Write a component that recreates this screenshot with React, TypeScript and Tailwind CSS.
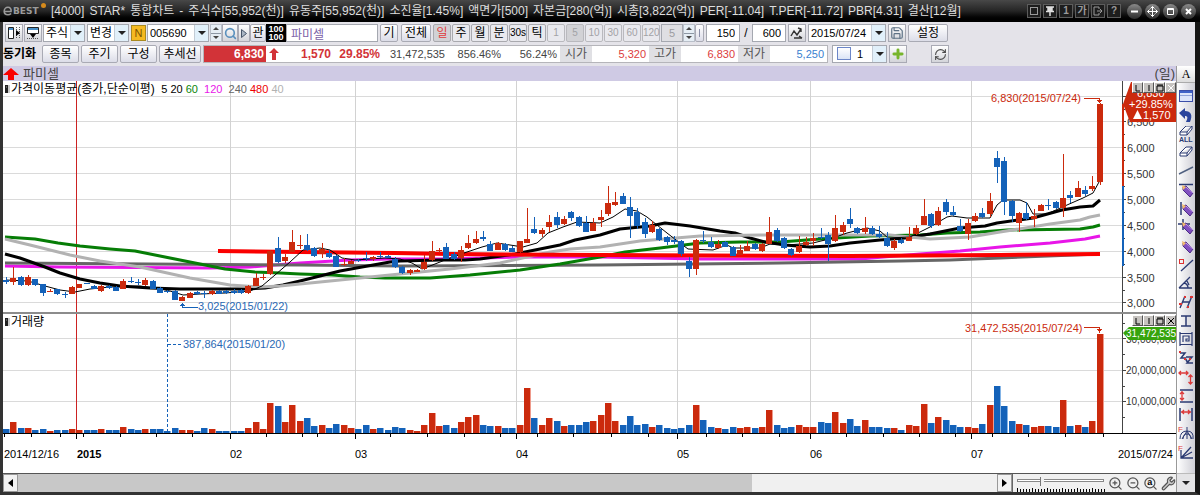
import type { ReactNode } from 'react';
import clsx from 'clsx';
import { Search, Save, Plus, RefreshCw, ZoomIn, ZoomOut, Wrench } from 'lucide-react';

const RED = '#cb2a0d';
const BLUE = '#1462b9';

// colour, body top, body bottom, high, low, volume bar height
type Bar = ['R' | 'B', number, number, number, number, number];

const BARS: Bar[] = [
  ['B', 280, 282, 277, 284, 4], ['R', 278, 282, 267, 285, 11], ['B', 277, 285, 276, 286, 5], ['R', 277, 285, 275, 286, 5],
  ['B', 279, 285, 279, 286, 3], ['B', 284, 293, 284, 296, 4], ['R', 291, 292, 289, 292, 2], ['B', 289, 294, 289, 295, 3],
  ['B', 294, 295, 292, 298, 3], ['R', 287, 294, 286, 294, 4], ['R', 284, 288, 284, 288, 3], ['B', 283, 284, 283, 284, 3],
  ['B', 286, 289, 285, 289, 3], ['R', 286, 291, 285, 292, 4], ['B', 286, 288, 285, 289, 3], ['B', 287, 291, 286, 291, 3],
  ['R', 281, 289, 279, 289, 6], ['B', 281, 282, 277, 283, 4], ['B', 282, 283, 279, 285, 3], ['R', 280, 285, 278, 286, 4],
  ['B', 281, 289, 280, 289, 4], ['B', 288, 293, 287, 293, 4], ['B', 291, 292, 290, 293, 2], ['B', 291, 300, 290, 300, 5],
  ['R', 297, 301, 296, 301, 3], ['R', 293, 298, 292, 298, 3], ['B', 292, 294, 291, 295, 2], ['B', 293, 294, 291, 298, 5],
  ['R', 291, 294, 290, 295, 4], ['B', 291, 294, 290, 294, 2], ['B', 291, 293, 290, 294, 2], ['B', 291, 293, 289, 294, 2],
  ['B', 290, 293, 289, 294, 2], ['R', 286, 293, 285, 294, 5], ['R', 278, 286, 273, 286, 11], ['R', 277, 278, 274, 280, 4],
  ['R', 251, 274, 250, 275, 30], ['B', 248, 262, 237, 263, 27], ['R', 257, 261, 254, 263, 11], ['R', 242, 252, 230, 252, 28],
  ['R', 245, 246, 235, 249, 12], ['B', 245, 250, 234, 251, 15], ['B', 248, 256, 247, 257, 7], ['R', 249, 254, 243, 258, 8],
  ['B', 253, 257, 250, 258, 5], ['B', 256, 267, 255, 267, 9], ['R', 264, 265, 258, 266, 8], ['R', 261, 264, 260, 264, 5],
  ['B', 260, 261, 259, 262, 4], ['B', 258, 259, 252, 261, 8], ['R', 257, 259, 256, 261, 4], ['B', 256, 257, 252, 258, 5],
  ['B', 256, 258, 255, 258, 3], ['B', 259, 267, 257, 268, 6], ['B', 267, 273, 266, 274, 5], ['R', 270, 273, 269, 275, 3],
  ['R', 270, 272, 269, 272, 2], ['R', 262, 269, 255, 270, 8], ['R', 251, 260, 241, 261, 20], ['R', 250, 251, 248, 253, 7],
  ['B', 247, 259, 243, 259, 8], ['B', 254, 259, 252, 260, 5], ['R', 250, 258, 246, 262, 11], ['R', 243, 248, 235, 249, 16],
  ['R', 239, 243, 231, 244, 18], ['B', 237, 239, 231, 241, 8], ['B', 244, 251, 241, 251, 7], ['R', 243, 250, 242, 250, 7],
  ['B', 244, 250, 243, 251, 5], ['B', 248, 252, 246, 252, 5], ['R', 241, 252, 241, 253, 8], ['R', 239, 243, 208, 243, 45],
  ['B', 229, 233, 217, 234, 15], ['R', 230, 234, 228, 237, 8], ['R', 222, 227, 215, 232, 15], ['B', 217, 225, 212, 228, 12],
  ['R', 219, 224, 216, 225, 7], ['B', 212, 218, 211, 221, 8], ['B', 217, 226, 216, 227, 8], ['B', 223, 232, 216, 232, 11],
  ['R', 223, 231, 218, 231, 12], ['R', 217, 220, 210, 227, 18], ['R', 203, 214, 186, 216, 30], ['R', 202, 205, 192, 206, 12],
  ['B', 196, 204, 193, 204, 8], ['B', 207, 216, 197, 238, 17], ['B', 212, 226, 208, 229, 8], ['B', 222, 234, 218, 238, 9],
  ['R', 225, 232, 221, 233, 6], ['B', 229, 240, 228, 241, 8], ['B', 237, 242, 236, 245, 5], ['B', 240, 242, 236, 244, 4],
  ['B', 241, 254, 240, 256, 5], ['B', 261, 269, 257, 277, 8], ['R', 240, 269, 239, 275, 28], ['B', 240, 241, 231, 243, 13],
  ['B', 242, 247, 237, 248, 6], ['R', 244, 248, 240, 249, 5], ['B', 242, 247, 241, 247, 4], ['B', 247, 256, 246, 256, 6],
  ['R', 250, 255, 245, 255, 5], ['R', 246, 251, 241, 251, 6], ['B', 244, 249, 243, 250, 5], ['R', 244, 251, 243, 252, 6],
  ['R', 232, 244, 217, 244, 23], ['B', 230, 241, 228, 242, 8], ['B', 238, 248, 237, 249, 5], ['B', 249, 255, 248, 256, 6],
  ['R', 246, 252, 236, 253, 8], ['R', 242, 245, 237, 246, 6], ['R', 238, 241, 233, 246, 6], ['B', 237, 238, 228, 239, 11],
  ['B', 235, 244, 232, 261, 10], ['R', 228, 241, 215, 242, 21], ['R', 225, 232, 222, 235, 10], ['B', 219, 224, 208, 228, 14],
  ['B', 228, 233, 227, 234, 7], ['R', 228, 232, 217, 234, 13], ['B', 228, 234, 226, 235, 6], ['B', 234, 237, 226, 238, 6],
  ['B', 238, 246, 232, 247, 5], ['R', 241, 248, 239, 250, 5], ['B', 240, 243, 238, 244, 3], ['R', 237, 241, 227, 241, 8],
  ['R', 228, 234, 225, 235, 7], ['R', 216, 225, 199, 225, 29], ['B', 214, 226, 213, 228, 10], ['R', 211, 225, 207, 226, 16],
  ['B', 202, 212, 199, 215, 13], ['B', 212, 215, 206, 216, 8], ['B', 226, 231, 219, 232, 6], ['R', 223, 234, 219, 240, 6],
  ['R', 216, 221, 213, 222, 5], ['B', 213, 217, 208, 218, 9], ['R', 201, 214, 193, 217, 28], ['B', 158, 167, 151, 183, 47],
  ['B', 161, 202, 157, 215, 27], ['B', 201, 216, 200, 222, 12], ['R', 213, 223, 212, 232, 9], ['B', 213, 219, 202, 220, 8],
  ['R', 216, 219, 209, 227, 6], ['R', 205, 211, 204, 211, 7], ['B', 205, 206, 199, 210, 7], ['B', 202, 208, 201, 209, 6],
  ['R', 198, 208, 154, 217, 33], ['B', 195, 198, 191, 203, 7], ['R', 188, 197, 181, 197, 8], ['B', 190, 194, 186, 196, 6],
  ['R', 186, 189, 176, 191, 12], ['R', 104, 182, 103, 185, 99],
];

const barX = (i: number) => Math.round(6 + 7.34 * i);

const AVERAGES = [
  { color: '#e815e8', width: 3, points: '5,266 60,267 210,268 250,267 300,263 350,260 390,259 440,259 520,257 600,257 700,259 800,259 860,259 895,256 920,254 960,251 1000,247 1050,243 1085,239 1100,236' },
  { color: '#666666', width: 3, points: '5,263 300,265 400,266 600,265 780,263 900,261 950,260 1000,258 1100,254' },
  { color: '#067d06', width: 3, points: '5,237 35,239 58,243 80,246 110,249 135,251 160,256 180,260 200,264 225,269 255,272 280,273 300,274 332,275 360,277 385,278 430,278 470,275 520,270 560,264 600,257 625,252 660,248 700,243 740,242 780,242 820,239 870,236 920,235 947,233 980,232 1007,230 1080,229 1093,227 1100,225' },
  { color: '#000000', width: 3, points: '5,254 20,258 45,267 60,273 80,279 100,283 120,286 150,288 180,289 220,289 245,289 265,288 283,285 300,281 320,276 340,271 362,267 390,262 400,261 440,260 465,260 480,259 515,254 535,250 560,245 575,240 600,235 620,229 650,226 665,223 690,226 720,231 735,233 750,238 765,242 785,245 810,247 830,246 850,243 880,240 905,238 930,234 945,231 960,228 985,226 997,223 1033,218 1062,210 1080,207 1093,206 1100,200' },
  { color: '#b2b2b2', width: 3, points: '5,239 30,245 70,255 100,261 140,267 190,278 230,285 260,287 280,286 300,284 350,279 400,274 450,269 500,263 550,252 570,249 600,247 640,241 700,236 760,235 890,235 930,239 970,237 1000,232 1050,224 1080,220 1090,217 1100,215' },
  { color: '#fa0000', width: 4, points: '218,251 300,252 395,253 450,254 600,255 850,256 1000,255 1100,254' },
  { color: '#000000', width: 1, points: '6,280 28,281 45,286 60,290 75,292 90,289 110,287 140,286 155,288 170,291 183,295 200,294 225,293 250,291 262,286 275,275 290,262 303,250 320,248 330,250 342,258 355,260 385,258 400,259 412,263 422,269 435,264 450,258 467,252 482,247 497,243 510,245 523,247 537,243 548,233 563,227 577,222 600,223 613,217 625,209 637,211 647,217 667,233 680,243 688,249 713,250 727,245 733,248 760,248 770,244 787,245 813,243 833,238 847,233 867,228 880,231 888,238 910,237 930,227 947,217 952,216 967,218 990,218 997,205 1003,200 1020,200 1027,203 1033,214 1047,214 1067,205 1083,198 1093,193 1099,182' },
];

const PRICE_LINES = [96, 121, 147, 173, 199, 225, 251, 277, 302];
const MONTHS = [
  { x: 230, label: '02' },
  { x: 355, label: '03' },
  { x: 516, label: '04' },
  { x: 677, label: '05' },
  { x: 810, label: '06' },
  { x: 971, label: '07' },
];
const TICKS = [5, 32, 61, 84, 121, 157, 193, 267, 303, 318, 391, 428, 465, 501, 538, 574, 612, 649, 707, 743, 780, 847, 884, 920, 956, 993, 1029, 1066, 1104];

const TITLE = [
  '[4000]', 'STAR*', '통합차트', '-', '주식수[55,952(천)]', '유동주[55,952(천)]', '소진율[1.45%]', '액면가[500]',
  '자본금[280(억)]', '시총[3,822(억)]', 'PER[-11.04]', 'T.PER[-11.72]', 'PBR[4.31]', '결산[12월]',
];

// horizontal place on the plot, which spans 3..1122
const left = (x: number) => ({ left: `${((x - 3) / 1119) * 100}%` });

const btn = 'h-[18px] shrink-0 border border-[#a9aab4] bg-linear-to-b from-white to-[#dcdde8] text-center text-xs leading-4 text-black rounded-xs';
const field = 'h-[18px] min-w-0 shrink-0 border border-[#a5a8b0] px-1 leading-4';

function Select({ label, value, className, children }: { label: string; value: string; className: string; children?: ReactNode }) {
  return (
    <div className={clsx('relative h-[18px] shrink-0 border border-[#a5a8b0] bg-white', className)}>
      {children}
      <select aria-label={label} defaultValue={value} className={clsx('block h-4 w-full appearance-none bg-transparent leading-4 outline-none', children ? 'pl-6' : 'pl-[2px]')}>
        <option>{value}</option>
      </select>
      <span className="pointer-events-none absolute inset-y-0 right-0 flex w-[14px] items-center justify-center border-l border-[#c3ccd6] bg-[#e1f0fa]">
        <Down />
      </span>
    </div>
  );
}

function Down() {
  return (
    <svg width="8" height="4" viewBox="0 0 8 4" aria-hidden="true">
      <path d="M0 0h8L4 4z" fill="#222" />
    </svg>
  );
}

function IconButton({ label, className, children }: { label: string; className?: string; children: ReactNode }) {
  return (
    <button aria-label={label} className={clsx('flex h-[18px] shrink-0 items-center justify-center border border-[#a9aab4] bg-linear-to-b from-white to-[#d4d5da]', className ?? 'w-[18px]')}>
      {children}
    </button>
  );
}

function Spinner({ label }: { label: string }) {
  return (
    <span className="flex h-[18px] w-3 shrink-0 flex-col border border-[#b9bfc9] bg-[#e6eef5]">
      <button aria-label={`${label} +`} className="flex flex-1 items-center justify-center border-b border-[#8d98a5]">
        <svg width="6" height="3" viewBox="0 0 6 3"><path d="M0 3h6L3 0z" fill="#444" /></svg>
      </button>
      <button aria-label={`${label} -`} className="flex flex-1 items-center justify-center">
        <svg width="6" height="3" viewBox="0 0 6 3"><path d="M0 0h6L3 3z" fill="#444" /></svg>
      </button>
    </span>
  );
}

function TitleBar() {
  const small = 'flex size-[14px] items-center justify-center border border-[#5c5c5c] bg-[#1d1d1d] text-[10px] leading-3 font-bold text-[#9a9a9a]';
  const round = 'flex size-[15px] items-center justify-center rounded-full bg-linear-to-b from-[#8a8a8a] to-[#2c2c2c]';
  return (
    <header className="flex h-[22px] items-center bg-linear-to-b from-[#484848] via-[#252525] to-black pr-1">
      <div className="relative flex w-12 shrink-0 items-center pl-[3px] font-['DejaVu_Sans','Noto_Sans_CJK_KR',sans-serif] font-bold text-[#9b9b9b]">
        <svg width="10" height="10" viewBox="0 0 10 10" aria-hidden="true">
          <path d="M2 5.5h6C8.600 3 7 1.300 5 1.300 2.700 1.300 1.200 3 1.200 5.200c0 2.300 1.700 3.600 3.700 3.600 1.200 0 2.300-.4 3.200-1.300" fill="none" stroke="currentColor" strokeWidth="1.600" />
        </svg>
        <span className="text-[9px] leading-3">BEST</span>
        <span className="absolute top-[-2px] right-[2px] size-[5px] rounded-full bg-[#d58a1c]" />
      </div>
      <h1 className="flex min-w-0 flex-1 gap-[5px] overflow-hidden pl-[3px] text-xs leading-4 whitespace-nowrap text-[#dedede]">
        {TITLE.map((t) => <span key={t}>{t}</span>)}
      </h1>
      <div className="flex shrink-0 items-center gap-[2px]">
        <button aria-label="창" className={small}><span className="size-2 border border-[#9a9a9a]" /></button>
        <button aria-label="고정" className={small}>
          <svg width="10" height="10" viewBox="0 0 10 10"><path d="M1 1h8M3 1v4h4V1M1 5.500h8M5 5v5" stroke="#ddd" strokeWidth="1.500" fill="#ddd" /></svg>
        </button>
        <button className={small}>1</button>
        <button className={small}>가</button>
        <button aria-label="내보내기" className={small}>
          <svg width="10" height="10" viewBox="0 0 10 10"><path d="M6 3V1H1v8h5V7M4 5h5M7 3l2 2-2 2" stroke="#9a9a9a" fill="none" /></svg>
        </button>
        <button className={small}>?</button>
      </div>
      <div className="ml-[6px] flex shrink-0 items-center gap-[3px]">
        <button aria-label="최소화" className={round}>
          <svg width="15" height="15" viewBox="0 0 15 15"><path d="M4 7.500h7" stroke="#fff" strokeWidth="2" /></svg>
        </button>
        <button aria-label="이동" className={round}>
          <svg width="15" height="15" viewBox="0 0 15 15"><path d="M2.500 7.500h10M7.500 2.500v10M5.500 4.500l2-2 2 2M5.500 10.500l2 2 2-2M4.500 5.500l-2 2 2 2M10.500 5.500l2 2-2 2" stroke="#fff" fill="none" /></svg>
        </button>
        <button aria-label="최대화" className={round}>
          <svg width="15" height="15" viewBox="0 0 15 15"><path d="M4.500 4.500h6v6h-6zM4.500 5.500h6" stroke="#fff" fill="none" /></svg>
        </button>
        <button aria-label="닫기" className={round}>
          <svg width="15" height="15" viewBox="0 0 15 15"><path d="M5 5l5 5M10 5l-5 5" stroke="#fff" strokeWidth="2" /></svg>
        </button>
      </div>
    </header>
  );
}

function ToolbarTop() {
  const minutes = ['1', '5', '10', '30', '60', '120'];
  return (
    <div className="flex h-[18px] items-center overflow-hidden">
      <div className="flex gap-px pl-[2px]">
        <IconButton label="왼쪽 패널">
          <svg width="14" height="14" viewBox="0 0 14 14"><path d="M1.500 1.500h5v11h-5z" fill="#fff" stroke="#222" /><path d="M2 3h4" stroke="#4a90c8" strokeWidth="2" /><path d="M9.500 1v12M12.500 1v12" stroke="#555" strokeDasharray="1 1" /><path d="M9 4l4 3-4 3z" /></svg>
        </IconButton>
        <IconButton label="위 패널">
          <svg width="14" height="14" viewBox="0 0 14 14"><path d="M1.500 1.500h11v6h-11z" fill="#fff" stroke="#222" /><path d="M2 3h10" stroke="#4a90c8" strokeWidth="2" /><path d="M1 12.500h12" stroke="#555" strokeDasharray="1 1" /><path d="M4 8h6l-3 4z" /></svg>
        </IconButton>
        <Select label="종류" value="주식" className="w-[42px] text-xs" />
        <Select label="변경" value="변경" className="ml-px w-[42px] text-xs" />
      </div>
      <button className="ml-[2px] h-4 w-[15px] shrink-0 border border-[#a88a20] bg-[#f5b921] text-center text-[11px] leading-3 text-[#7c5200]">N</button>
      <Select label="종목코드" value="005690" className="ml-px w-[62px] text-[11px]" />
      <span className="ml-px flex">
        <Spinner label="종목" />
        <IconButton label="검색" className="w-4"><Search size={13} strokeWidth={3} className="text-[#5990bd]" /></IconButton>
        <IconButton label="다음" className="w-3">
          <svg width="6" height="9" viewBox="0 0 6 9"><path d="M.5.5v8L5.500 4.500z" fill="#aab6c4" stroke="#475569" /></svg>
        </IconButton>
        <button className={clsx(btn, 'w-4')}>관</button>
        <span className="flex h-[18px] w-5 flex-col items-center justify-center bg-black text-[9px] leading-2 font-bold text-white">
          <span>100</span>
          <span>100</span>
        </span>
      </span>
      <input aria-label="종목명" defaultValue="파미셀" className={clsx(field, 'w-[92px] bg-white text-xs text-[#7b61a8]')} />
      <button className={clsx(btn, 'ml-[2px] w-[18px]')}>기</button>
      <button className={clsx(btn, 'ml-[3px] w-[30px]')}>전체</button>
      <div className="ml-[2px] flex gap-px">
        {['일', '주', '월', '분', '30s', '틱'].map((t, i) => (
          <button key={t} className={clsx('h-[18px] w-[18px] rounded-xs border border-[#a9a9ae] text-center leading-4 whitespace-nowrap', t.length > 1 ? 'text-[10px]' : 'text-xs', i === 0 ? 'bg-[#d2d2d6] text-[#e03c3c]' : 'bg-[#e9e9ee]')}>
            {t}
          </button>
        ))}
      </div>
      <div className="ml-px flex gap-px">
        {minutes.map((t, i) => (
          <button key={t} disabled className={clsx('h-[18px] w-[18px] rounded-xs border border-[#b9b9be] text-center text-[10px] leading-4 text-[#a2a2a6]', i === 1 ? 'bg-[#d2d2d6]' : 'bg-[#e9e9ee]')}>
            {t}
          </button>
        ))}
      </div>
      <input aria-label="분" disabled defaultValue="5" className={clsx(field, 'ml-px w-[22px] bg-[#dfdfe3] text-center text-[11px] text-[#9c9ca0]')} />
      <Spinner label="분" />
      <button aria-label="구분" className={clsx(btn, 'flex w-[9px] items-center justify-center')}>
        <span className="h-2 w-px bg-[#8a8fa8]" />
      </button>
      <input aria-label="표시 개수" defaultValue="150" className={clsx(field, 'ml-[2px] w-[34px] bg-white text-right text-[11px]')} />
      <span className="w-3 text-center text-xs">/</span>
      <input aria-label="전체 개수" defaultValue="600" className={clsx(field, 'w-[34px] bg-white text-right text-[11px]')} />
      <span className="ml-[2px] flex gap-[2px]">
        <IconButton label="지표">
          <svg width="14" height="14" viewBox="0 0 14 14"><path d="M1 10l3-5 3 4 4-6M4 12h8M8 2l3 1v3M9 10l3 2" stroke="#333" strokeWidth="1.400" fill="none" /></svg>
        </IconButton>
        <Select label="날짜" value="2015/07/24" className="w-[78px] text-[11px]" />
        <IconButton label="저장"><Save size={14} className="text-[#5d7185]" /></IconButton>
        <button className={clsx(btn, 'w-10')}>설정</button>
      </span>
    </div>
  );
}

function Quote({ label, value, className }: { label: string; value: string; className: string }) {
  return (
    <>
      <dt className="flex h-4 w-8 shrink-0 items-center justify-center bg-[#e0e0e4] text-xs text-[#555]">{label}</dt>
      <dd className={clsx('w-[57px] shrink-0 pr-[3px] text-right text-[11px] leading-4', className)}>{value}</dd>
    </>
  );
}

function ToolbarBottom() {
  return (
    <div className="flex h-[18px] items-center overflow-hidden">
      <span className="w-[39px] shrink-0 text-xs font-bold whitespace-nowrap">동기화</span>
      <div className="flex gap-[2px]">
        <button className={clsx(btn, 'w-[37px]')}>종목</button>
        <button className={clsx(btn, 'w-[37px]')}>주기</button>
        <button className={clsx(btn, 'w-[37px]')}>구성</button>
        <button className={clsx(btn, 'w-[42px]')}>추세선</button>
      </div>
      <dl className="ml-[2px] flex h-[18px] shrink-0 items-center border border-[#b5b5ba] bg-white text-xs leading-4">
        <dd className="h-4 w-[62px] bg-[#d23338] pr-[2px] text-right font-bold text-white">6,830</dd>
        <dd className="flex w-4 justify-center">
          <svg width="10" height="12" viewBox="0 0 10 12"><path d="M5 0l5 5H7v7H3V5H0z" fill="#d23338" /></svg>
        </dd>
        <dd className="w-[49px] text-right font-bold text-[#d23338]">1,570</dd>
        <dd className="w-[49px] text-right font-bold text-[#d23338]">29.85%</dd>
        <dd className="w-[65px] text-right text-[11px] text-[#444]">31,472,535</dd>
        <dd className="w-14 text-right text-[11px] text-[#444]">856.46%</dd>
        <dd className="w-[59px] pr-[3px] text-right text-[11px] text-[#444]">56.24%</dd>
        <Quote label="시가" value="5,320" className="text-[#dc3c3c]" />
        <Quote label="고가" value="6,830" className="text-[#dc3c3c]" />
        <Quote label="저가" value="5,250" className="text-[#3b7fd0]" />
      </dl>
      <Select label="차트 수" value="1" className="ml-1 w-[55px] text-[11px]">
        <span className="absolute top-px left-1 h-[13px] w-[14px] border border-[#6c86c8] bg-linear-to-b from-white to-[#dbe4f6]" />
      </Select>
      <span className="ml-[2px] flex gap-6">
        <IconButton label="추가"><Plus size={14} strokeWidth={5} className="text-[#77b52c]" /></IconButton>
        <IconButton label="새로고침"><RefreshCw size={13} className="text-[#4c4c4c]" /></IconButton>
      </span>
    </div>
  );
}

function PanelButtons({ dim }: { dim?: boolean }) {
  const cls = 'flex h-[11px] w-[11px] items-center justify-center border border-white border-r-[#555] border-b-[#555] bg-[#c6c3c0]';
  return (
    <div className="absolute top-px right-0 flex">
      {['M2 1v6h4', 'M4 1v6', 'M1 2h6v5H1zM1 1h6', 'M1 1l6 6M7 1l-6 6'].map((d, i) => (
        <button key={d} aria-label={['로그', '분할', '확대', '닫기'][i]} className={cls}>
          <svg width="8" height="8" viewBox="0 0 8 8"><path d={d} stroke={dim && i === 3 ? '#fff' : '#000'} fill="none" /></svg>
        </button>
      ))}
    </div>
  );
}

function PanelTitle({ children }: { children: ReactNode }) {
  return (
    <div className="absolute top-0 left-px flex items-center text-xs leading-4 whitespace-pre">
      <svg width="7" height="10" viewBox="0 0 7 10" aria-hidden="true"><path d="M1 1h3v8H1z" fill="#222" /><path d="M5 1v8M2 3h1" stroke="#999" /></svg>
      {children}
    </div>
  );
}

function PricePanel() {
  return (
    <section className="flex h-[231px] bg-white">
      <div className="relative min-w-0 flex-1">
        <svg className="block h-full w-full" viewBox="3 81 1119 231" preserveAspectRatio="none" shapeRendering="crispEdges" role="img" aria-label="가격 차트">
          {PRICE_LINES.map((y) => <rect key={y} x="3" y={y} width="1119" height="1" fill="#dadada" />)}
          {MONTHS.map((m) => <rect key={m.x} x={m.x} y="81" width="1" height="231" fill="#d2d2d2" />)}
          <rect x="76" y="81" width="1" height="231" fill="#c22" />
          {AVERAGES.map((a) => (
            <polyline key={a.points} points={a.points} fill="none" stroke={a.color} strokeWidth={a.width} strokeLinejoin="round" shapeRendering="auto" />
          ))}
          {BARS.map(([c, top, bottom, high, low], i) => (
            <g key={i} fill={c === 'R' ? RED : BLUE}>
              <rect x={barX(i)} y={high} width="1" height={low - high} />
              <rect x={barX(i) - 3} y={top} width="6" height={bottom - top} />
            </g>
          ))}
          <path d="M1084 98.500H1099.500V102" fill="none" stroke={RED} />
          <path d="M1097 100h5l-2.500 3z" fill={RED} />
          <path d="M198 307.500H182.500V305" fill="none" stroke={BLUE} />
          <path d="M180 306h5l-2.500-3z" fill={BLUE} />
        </svg>
        <PanelTitle>
          <span>가격이동평균(종가,단순이평) </span>
          <span className="text-[11px]"> 5 20 <span className="text-[#0a850a]">60</span>  <span className="text-[#e815e8]">120</span>  <span className="text-[#666]">240</span> <span className="text-[#e00]">480</span> <span className="text-[#b2b2b2]">40</span></span>
        </PanelTitle>
        <span className="absolute top-[9px] text-[11px] leading-4 text-[#cb2a0d]" style={left(991)}>6,830(2015/07/24)</span>
        <span className="absolute top-[217px] text-[11px] leading-4 text-[#2a68b4]" style={left(198)}>3,025(2015/01/22)</span>
      </div>
      <div className="relative w-[54px] shrink-0">
        <svg width="54" height="231" viewBox="1122 81 54 231" className="block text-[11px]" aria-hidden="true">
          <rect x="1122" y="81" width="1" height="231" fill="#444" />
          {PRICE_LINES.map((y) => <path key={y} d={`M1123 ${y + 0.5}h3M1123 ${y + 13.5}h2`} stroke="#444" />)}
          {['6,500', '6,000', '5,500', '5,000', '4,500', '4,000', '3,500', '3,000'].map((t, i) => (
            <text key={t} x="1127" y={PRICE_LINES[i + 1] + 5} fill="#333">{t}</text>
          ))}
          <rect x="1121" y="104" width="3" height="82" fill={RED} />
          <rect x="1121" y="186" width="3" height="80" fill={BLUE} />
          <path d="M1123 104l8-22h45v40h-46z" fill={RED} />
          <g fill="#fff">
            <text x="1137" y="97">6,830</text>
            <text x="1129" y="108">+29.85%</text>
            <text x="1143" y="119">1,570</text>
            <path d="M1133 119h9l-4.500-9z" />
          </g>
        </svg>
        <PanelButtons dim />
      </div>
    </section>
  );
}

function VolumePanel() {
  return (
    <section className="flex h-[120px] border-b border-black bg-white">
      <div className="relative min-w-0 flex-1">
        <svg className="block h-full w-full" viewBox="3 314 1119 119" preserveAspectRatio="none" shapeRendering="crispEdges" role="img" aria-label="거래량 차트">
          {[338, 370, 401].map((y) => <rect key={y} x="3" y={y} width="1119" height="1" fill="#dadada" />)}
          {MONTHS.map((m) => <rect key={m.x} x={m.x} y="314" width="1" height="119" fill="#d2d2d2" />)}
          <rect x="76" y="314" width="1" height="119" fill="#c22" />
          <path d="M167.500 314V433M168 344.500h14" stroke={BLUE} strokeDasharray="3 2" />
          {BARS.map(([c, , , , , v], i) => (
            <g key={i}>
              <rect x={barX(i) - 3} y={433 - v} width="7" height={v} fill={c === 'R' ? '#ef9a8b' : '#84b4e6'} />
              <rect x={barX(i) - 3} y={433 - v} width="6" height={v} fill={c === 'R' ? RED : BLUE} />
            </g>
          ))}
          <path d="M1084 327.500H1099.500V331" fill="none" stroke={RED} />
          <path d="M1097 329h5l-2.500 4z" fill={RED} />
        </svg>
        <PanelTitle>거래량</PanelTitle>
        <span className="absolute top-[22px] text-[11px] leading-4 text-[#2a68b4]" style={left(183)}>387,864(2015/01/20)</span>
        <span className="absolute top-[6px] text-[11px] leading-4 text-[#cb2a0d]" style={left(965)}>31,472,535(2015/07/24)</span>
      </div>
      <div className="relative w-[54px] shrink-0">
        <svg width="54" height="119" viewBox="1122 314 54 119" className="block text-[10px]" aria-hidden="true">
          <rect x="1122" y="314" width="1" height="119" fill="#444" />
          <path d="M1123 323.500h2M1123 338.500h3M1123 354.500h2M1123 370.500h3M1123 386.500h2M1123 401.500h3M1123 417.500h2" stroke="#444" />
          <g fill="#333">
            <text x="1126" y="343">30,000,000</text>
            <text x="1126" y="374">20,000,000</text>
            <text x="1126" y="405">10,000,000</text>
          </g>
          <path d="M1123 333l6-6h47v13h-47z" fill="#36a40c" />
          <text x="1126" y="337" fill="#fff">31,472,535</text>
        </svg>
        <PanelButtons />
      </div>
    </section>
  );
}

function DateAxis() {
  return (
    <div className="flex h-[39px] bg-white text-[11px]">
      <div className="relative min-w-0 flex-1">
        <svg className="block h-[5px] w-full" viewBox="3 434 1119 5" preserveAspectRatio="none" shapeRendering="crispEdges" aria-hidden="true">
          {TICKS.map((x) => <rect key={x} x={x - 1} y="434" width="1" height="3" />)}
          {[76, ...MONTHS.map((m) => m.x)].map((x) => <rect key={x} x={x} y="434" width="1" height="5" />)}
        </svg>
        <span className="absolute top-3 leading-4" style={left(4)}>2014/12/16</span>
        <span className="absolute top-3 leading-4 font-bold" style={left(77)}>2015</span>
        {MONTHS.map((m) => <span key={m.label} className="absolute top-3 leading-4" style={left(m.x)}>{m.label}</span>)}
      </div>
      <div className="flex w-[54px] shrink-0 justify-end pt-3 pr-[3px] leading-4 whitespace-nowrap">2015/07/24</div>
    </div>
  );
}

function ScrollRow() {
  const end = 'flex w-[15px] shrink-0 items-center justify-center border border-[#999] bg-[#f2f2f2]';
  return (
    <div className="flex h-[19px] border-t border-[#555] bg-[#f0f0f0]">
      <button aria-label="이전" className={end}><svg width="5" height="8" viewBox="0 0 5 8"><path d="M5 0v8L0 4z" /></svg></button>
      <div className="min-w-0 flex-1 bg-[#f0f0f0]">
        <div className="h-full w-3/4 bg-[#c8c8c8]" />
      </div>
      <button aria-label="다음" className={end}><svg width="5" height="8" viewBox="0 0 5 8"><path d="M0 0v8L5 4z" /></svg></button>
      <div className="flex w-24 shrink-0 flex-col justify-between border-l border-[#666] px-1 pt-px">
        <input
          type="range"
          aria-label="확대 비율"
          min="0"
          max="100"
          defaultValue="27"
          className="h-[11px] w-full appearance-none bg-transparent [&::-webkit-slider-runnable-track]:h-[3px] [&::-webkit-slider-runnable-track]:border [&::-webkit-slider-runnable-track]:border-[#888] [&::-webkit-slider-runnable-track]:bg-white [&::-webkit-slider-thumb]:mt-[-3px] [&::-webkit-slider-thumb]:h-[9px] [&::-webkit-slider-thumb]:w-1 [&::-webkit-slider-thumb]:appearance-none [&::-webkit-slider-thumb]:border-l [&::-webkit-slider-thumb]:border-[#777] [&::-webkit-slider-thumb]:bg-[#f0f0f0]"
        />
        <svg width="88" height="4" viewBox="0 0 88 4" shapeRendering="crispEdges" aria-hidden="true">
          {Array.from({ length: 30 }, (_, i) => <rect key={i} x={i * 3} y={i % 5 ? 1 : 0} width="1" height="4" />)}
        </svg>
      </div>
      <div className="flex w-[68px] shrink-0 items-center justify-between text-[#555]">
        <button aria-label="확대"><ZoomIn size={15} strokeWidth={2} /></button>
        <button aria-label="축소"><ZoomOut size={15} strokeWidth={2} /></button>
        <button aria-label="자동" className="relative">
          <Search size={15} strokeWidth={2} />
          <span className="absolute inset-x-0 top-0 pr-[2px] text-center text-[9px] leading-3 font-bold text-black">a</span>
        </button>
        <button aria-label="도구"><Wrench size={15} className="fill-[#ccc]" /></button>
      </div>
    </div>
  );
}

const pencil = (
  <>
    <path d="M5 5l3-1 7 7-3 4-7-7z" fill="#8150c0" stroke="#4b2a86" />
    <path d="M5 8l3-3-4-2z" fill="#f3bd6b" />
    <path d="M8 5l7 6" stroke="#c7a5ee" />
  </>
);
const eraser = <path d="M2 9l6-6h6l-5 6zM2 9v3h7l5-6V3M9 9v3" fill="#fff" stroke="#2b3a72" />;

const TOOLS: { name: string; art: ReactNode }[] = [
  { name: '창', art: <><rect x="1.500" y="2.500" width="13" height="11" fill="#dbe4fb" stroke="#3b4ea8" /><path d="M2 4h12" stroke="#3f62c8" strokeWidth="2" /><path d="M2 7.500h12" stroke="#8fa3da" /></> },
  { name: '되돌리기', art: <path d="M1 6l6-5v3c6 0 8 4 5 11H8c2-4 2-6-1-6v3z" fill="#2b459c" /> },
  { name: '모두 지우기', art: <><g transform="translate(0 -3)">{eraser}</g><text x="1" y="16" fontSize="7" fontWeight="bold" fill="#2b3a72">ALL</text></> },
  { name: '지우기', art: eraser },
  { name: '추세선', art: <path d="M1 11l14-7" stroke="#506080" strokeWidth="1.500" /> },
  { name: '수평선', art: <><path d="M1 2.500h14" stroke="#2b3a72" strokeWidth="1.500" />{pencil}</> },
  { name: '수직선', art: <><path d="M3 1v13" stroke="#2b3a72" strokeWidth="1.500" />{pencil}</> },
  { name: '십자선', art: <><path d="M5 0v11M0 5h12" stroke="#2b3a72" strokeWidth="1.500" />{pencil}</> },
  { name: '연필', art: pencil },
  { name: '직선', art: <><rect x="1.500" y="2.500" width="4" height="4" fill="none" stroke="#d33" /><path d="M3 14L15 3" stroke="#2b3a72" strokeWidth="1.300" /></> },
  { name: '각도', art: <path d="M1 13h13M1 13L12 2M6 8q4 1 4 5M9 6l2 4" stroke="#2b3a72" strokeWidth="1.300" fill="none" /> },
  { name: '평행선', art: <><path d="M2 14L7 2M9 14l5-12M5 8h6" stroke="#2b3a72" strokeWidth="1.400" /><path d="M1 10h3M12 3h3M6 3h2M9 13h2" stroke="#d33" strokeWidth="2" /></> },
  { name: '구간', art: <path d="M3 3h10M3 13h10M8 3v10" stroke="#2b3a72" strokeWidth="1.500" /> },
  { name: '사각', art: <path d="M2 1v14M14 1v14M2 2.500h12M2 13.500h12M5 11V5h6v5H8V8h2" stroke="#2b3a72" strokeWidth="1.200" fill="none" /> },
  { name: '파동', art: <><path d="M2 3h5l-4 5h5M8 7h6l-5 6h6M7 8l3 5" stroke="#2b3a72" strokeWidth="1.500" fill="none" /><path d="M1 2h2M6 9h2M11 9h2" stroke="#d33" strokeWidth="2" /></> },
  { name: '가로세로', art: <path d="M1 4h9M3 2L1 4l2 2M8 2l2 2-2 2M12.500 6v9M10.500 8l2-2 2 2M10.500 13l2 2 2-2" stroke="#dc3a3a" strokeWidth="1.300" fill="none" /> },
  { name: '세로 폭', art: <><path d="M2 2h13M2 14h13" stroke="#2b3a72" strokeWidth="1.500" /><path d="M4 3v10M2 6l2-2 2 2M2 10l2 2 2-2" stroke="#dc3a3a" strokeWidth="1.300" fill="none" /></> },
  { name: '가로 폭', art: <><path d="M2 2v13M14 2v13" stroke="#2b3a72" strokeWidth="1.500" /><path d="M3 6h10M6 4L4 6l2 2M10 4l2 2-2 2" stroke="#dc3a3a" strokeWidth="1.300" fill="none" /></> },
  { name: '피보나치 원', art: <><path d="M2 14q0-8 7-8t6 8M5 14q0-5 4-5t4 5M9 2v12M4 14L9 6l5 8" stroke="#2b3a72" fill="none" /><text x="0" y="7" fontSize="8" fill="#dc3a3a">F</text></> },
  { name: '피보나치 팬', art: <><path d="M3 6v8h12M3 14L13 3M3 14l11-6" stroke="#2b3a72" strokeWidth="1.300" fill="none" /><text x="0" y="7" fontSize="8" fill="#dc3a3a">F</text></> },
];

function ToolColumn() {
  return (
    <aside className="flex w-[19px] shrink-0 flex-col border-l border-[#999] bg-linear-to-r from-white to-[#cfcfd6]">
      <button className="h-[17px] shrink-0 border-b border-[#aaa] bg-linear-to-b from-white to-[#ddd] font-['Liberation_Serif','Noto_Sans_CJK_KR',serif] text-xs leading-4">A</button>
      <div className="mt-1 flex min-h-0 flex-1 flex-col">
        {TOOLS.map((t) => (
          <button key={t.name} aria-label={t.name} className="flex min-h-0 flex-1 items-center justify-center">
            <svg width="16" height="16" viewBox="0 0 16 16" fill="none" aria-hidden="true">{t.art}</svg>
          </button>
        ))}
      </div>
      <button aria-label="아래로" className="mt-3 flex h-[19px] shrink-0 items-center justify-center border-t border-[#bbb] bg-[#e4e4e6]"><Down /></button>
    </aside>
  );
}

export default function App() {
  return (
    <div className="min-h-screen bg-[#151515] font-['Liberation_Sans','Noto_Sans_CJK_KR',sans-serif] text-black">
      <TitleBar />
      <div className="border-r-[5px] border-b-[3px] border-l-[3px] border-[#151515] border-l-[#333] border-b-[#333] bg-[#e4e3e9]">
        <div className="flex h-11 flex-col gap-[3px] pt-[2px]">
          <ToolbarTop />
          <ToolbarBottom />
        </div>
        <main className="flex">
          <div className="min-w-0 flex-1">
            <div className="flex h-[15px] items-center bg-[#cfcae4] text-[13px] leading-[15px] text-[#444]">
              <svg width="16" height="14" viewBox="0 0 16 14" aria-hidden="true"><path d="M8 1l8 7h-5v5H5V8H0z" fill="#fa0000" /></svg>
              <h2 className="ml-1 flex-1">파미셀</h2>
              <span className="pr-px">(일)</span>
            </div>
            <PricePanel />
            <div className="h-[2px] bg-[#8c8c8c]" />
            <VolumePanel />
            <DateAxis />
            <ScrollRow />
          </div>
          <ToolColumn />
        </main>
      </div>
    </div>
  );
}
